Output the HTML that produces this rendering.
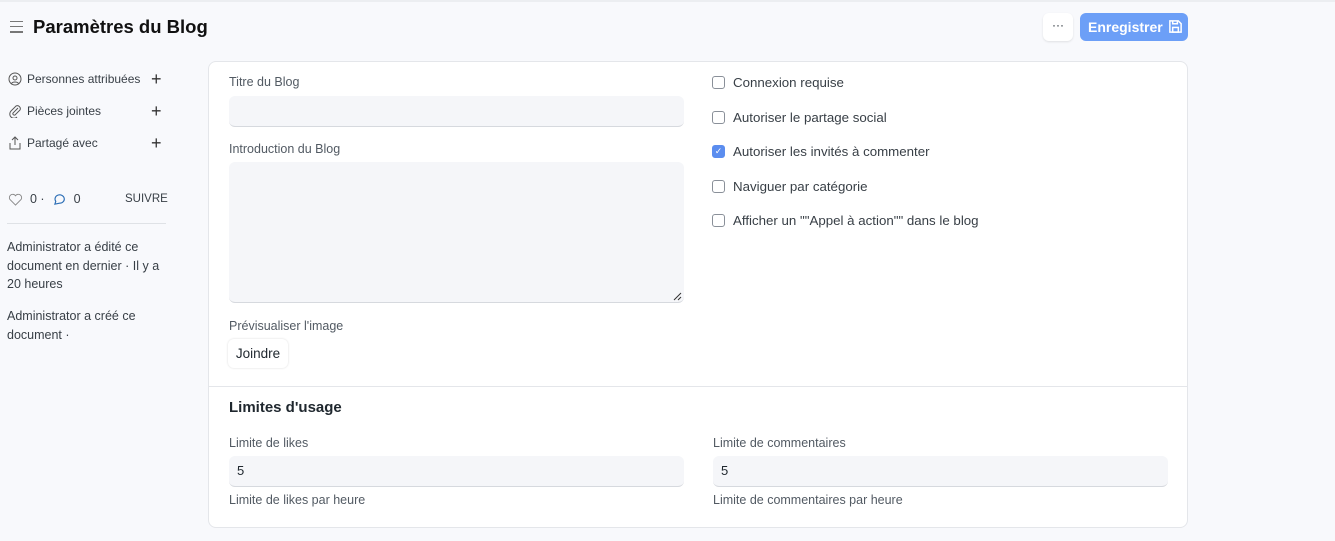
<!DOCTYPE html>
<html><head><meta charset="utf-8"><style>
*{box-sizing:border-box;margin:0;padding:0}
body{width:1335px;height:541px;background:#f8f9fc;font-family:"Liberation Sans",sans-serif;color:#1f272e;position:relative;overflow:hidden;font-size:13px}
.abs{position:absolute}
.lbl{position:absolute;font-size:12.5px;color:#525a63}
.inp{position:absolute;background:#f5f6f9;border-radius:6px;border-bottom:1px solid #d6d9de}
.side{position:absolute;left:8px;font-size:12px;color:#383f46;display:flex;align-items:center;gap:5px}
.plus{position:absolute;left:151px;font-size:18px;color:#333;font-weight:300}
.cb{position:absolute;left:712px;font-size:13.3px;color:#383f46;display:flex;align-items:center;gap:8px}
.box{width:13px;height:13px;border:1px solid #8a9099;border-radius:3px;background:#fff}
</style></head><body>
<div class="abs" style="top:0;left:0;width:1335px;height:2px;background:#eceef1"></div>
<div class="abs" style="left:10px;top:21px;width:13px">
<div style="height:1.2px;background:#777;margin-bottom:4px"></div><div style="height:1.2px;background:#777;margin-bottom:4px"></div><div style="height:1.2px;background:#777"></div></div>
<div class="abs" style="left:33px;top:16px;font-size:18.5px;font-weight:bold;color:#111">Paramètres du Blog</div>
<div class="abs" style="left:1043px;top:13px;width:30px;height:28px;background:#fff;border-radius:6px;box-shadow:0 1px 2px rgba(0,0,0,.1);text-align:center;font-size:12px;line-height:24px">···</div>
<div class="abs" style="left:1080px;top:13px;width:108px;height:28px;background:#6c9ff7;border-radius:6px;color:#fff;font-weight:bold;font-size:14px;line-height:28px;padding-left:8px">Enregistrer
<svg class="abs" style="left:88px;top:6px" width="15" height="15" viewBox="0 0 16 16" fill="none" stroke="#fff" stroke-width="1.6"><path d="M2 2h9l3 3v9H2z"/><path d="M5 2v3h5V2"/><rect x="5" y="9" width="6" height="5"/></svg></div>

<div class="side" style="top:72px"><svg width="14" height="14" viewBox="0 0 14 14" fill="none" stroke="#555" stroke-width="1"><circle cx="7" cy="7" r="6"/><circle cx="7" cy="6" r="2"/><path d="M3.5 11.5c1-2 6-2 7 0"/></svg>Personnes attribuées</div>
<div class="plus" style="top:69px">+</div>
<div class="side" style="top:104px"><svg width="14" height="14" viewBox="0 0 14 14" fill="none" stroke="#555" stroke-width="1"><path d="M10 4L5 9a1.5 1.5 0 002 2l5-5a3 3 0 00-4-4L3 7a4 4 0 006 6"/></svg>Pièces jointes</div>
<div class="plus" style="top:101px">+</div>
<div class="side" style="top:136px"><svg width="14" height="14" viewBox="0 0 14 14" fill="none" stroke="#555" stroke-width="1"><path d="M7 9V1M4 4l3-3 3 3M2 7v6h10V7"/></svg>Partagé avec</div>
<div class="plus" style="top:133px">+</div>
<div class="side" style="top:192px;font-size:12.5px;gap:7px"><svg width="15" height="13" viewBox="0 0 16 14" fill="none" stroke="#888" stroke-width="1"><path d="M8 13L2 7a3.3 3.3 0 016-4 3.3 3.3 0 016 4z"/></svg>0 · <svg width="15" height="13" viewBox="0 0 16 14" fill="none" stroke="#2a6db5" stroke-width="1.2"><path d="M3 12l1-3a5 4.5 0 114 2z"/></svg>0</div>
<div class="abs" style="left:125px;top:193px;font-size:11.5px;color:#383f46">SUIVRE</div>
<div class="abs" style="left:7px;top:223px;width:159px;height:1px;background:#dfe2e6"></div>
<div class="abs" style="left:7px;top:238px;width:160px;font-size:12.5px;line-height:18.5px;color:#383f46">Administrator a édité ce document en dernier · Il y a 20 heures</div>
<div class="abs" style="left:7px;top:307px;width:160px;font-size:12.5px;line-height:18.5px;color:#383f46">Administrator a créé ce document ·</div>

<div class="abs" style="left:208px;top:61px;width:980px;height:467px;background:#fff;border:1px solid #e4e6ea;border-radius:8px"></div>
<div class="lbl" style="left:229px;top:75px">Titre du Blog</div>
<div class="inp" style="left:229px;top:96px;width:455px;height:31px"></div>
<div class="lbl" style="left:229px;top:142px">Introduction du Blog</div>
<div class="inp" style="left:229px;top:162px;width:455px;height:141px"></div>
<svg class="abs" style="left:673px;top:292px" width="9" height="9" viewBox="0 0 9 9" stroke="#333" stroke-width="1"><path d="M1 8L8 1M5 8L8 5"/></svg>
<div class="lbl" style="left:229px;top:319px">Prévisualiser l'image</div>
<div class="abs" style="left:228px;top:339px;width:60px;height:29px;background:#fff;border-radius:6px;box-shadow:0 0 2px rgba(0,0,0,.15);font-size:13.5px;line-height:29px;text-align:center">Joindre</div>

<div class="cb" style="top:75px"><div class="box"></div>Connexion requise</div>
<div class="cb" style="top:110px"><div class="box"></div>Autoriser le partage social</div>
<div class="cb" style="top:144px"><div class="box" style="background:#5b8def;border-color:#5b8def;color:#fff;font-size:9px;text-align:center;line-height:11px">✓</div>Autoriser les invités à commenter</div>
<div class="cb" style="top:179px"><div class="box"></div>Naviguer par catégorie</div>
<div class="cb" style="top:213px"><div class="box"></div>Afficher un ""Appel à action"" dans le blog</div>

<div class="abs" style="left:209px;top:386px;width:978px;height:1px;background:#e4e6ea"></div>
<div class="abs" style="left:229px;top:399px;font-size:15px;font-weight:bold;color:#1f272e">Limites d'usage</div>
<div class="lbl" style="left:229px;top:436px">Limite de likes</div>
<div class="inp" style="left:229px;top:456px;width:455px;height:31px;padding:7px 8px;font-size:13px;color:#1f272e">5</div>
<div class="lbl" style="left:229px;top:493px">Limite de likes par heure</div>
<div class="lbl" style="left:713px;top:436px">Limite de commentaires</div>
<div class="inp" style="left:713px;top:456px;width:455px;height:31px;padding:7px 8px;font-size:13px;color:#1f272e">5</div>
<div class="lbl" style="left:713px;top:493px">Limite de commentaires par heure</div>
</body></html>
